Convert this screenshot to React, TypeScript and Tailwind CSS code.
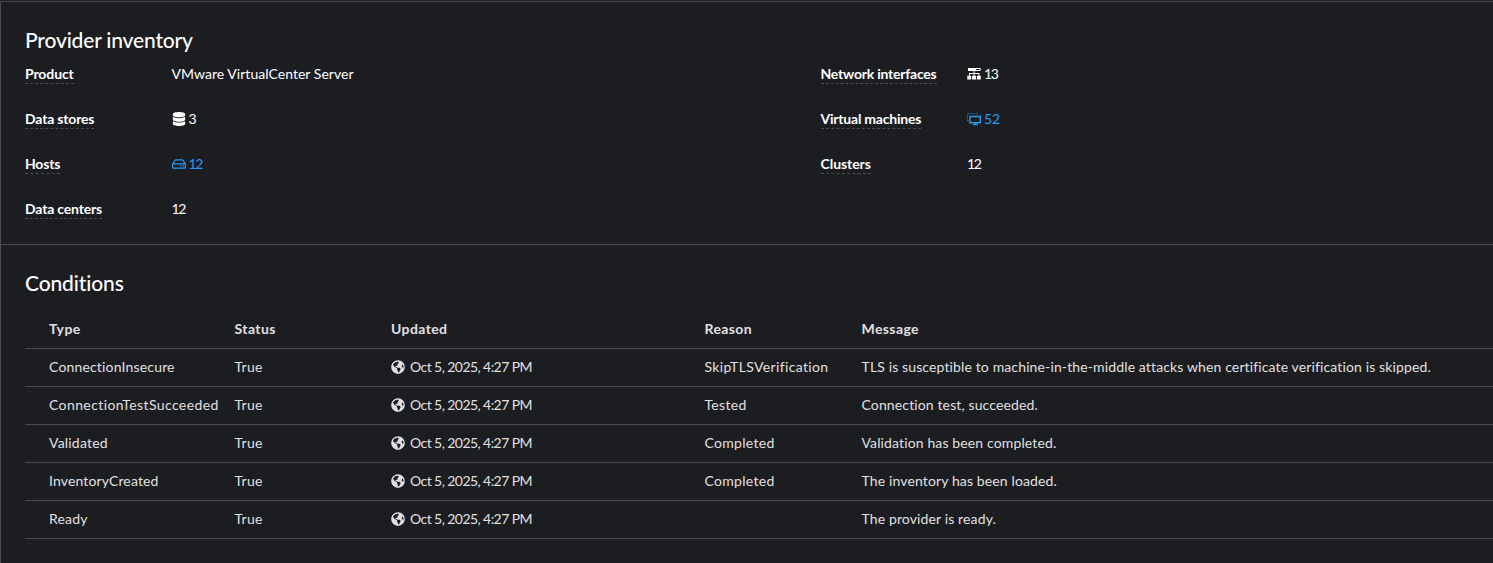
import type { ReactNode } from "react";
import { FaDatabase, FaGlobeAmericas, FaRegHdd } from "react-icons/fa";

function NetworkIcon() {
  return (
    <svg viewBox="0 0 14 14" className="size-3.5" fill="currentColor">
      <path fillRule="evenodd" d="M1 1h12.6v3H1zM9 2v1h3.8V2z" />
      <path d="M6.6 4h1v2h4.8v3h-.9V6.9H7.6V9h-1V6.9H2.9V9H2V6h4.6z" />
      <path d="M.3 8.8h3.9v3.8H.3zM5.1 8.8H9v3.8H5.1zM9.9 8.8h3.9v3.8H9.9z" />
    </svg>
  );
}

function VirtualMachineIcon() {
  return (
    <svg viewBox="0 0 14 14" className="size-3.5" fill="none" stroke="currentColor">
      <path d="M.6 9V1.6h9.8v1.2M.6 9H2" strokeWidth=".9" strokeDasharray="1.2 .8" opacity=".8" />
      <path d="M3 4.5h10.3v6.2H3z" strokeWidth="1.4" />
      <path d="M8.2 11v1.4M5.8 12.6h4.8" strokeWidth="1.2" />
    </svg>
  );
}

function Detail({ label, labelClass = "", children }: { label: string; labelClass?: string; children: ReactNode }) {
  return (
    <div className="grid h-[21px] grid-cols-[146.5px_1fr]">
      <dt>
        <span className={`inline-block h-5 border-b border-dashed border-[#4d4d4d] align-top leading-5 font-bold whitespace-nowrap text-white ${labelClass}`}>
          {label}
        </span>
      </dt>
      <dd className="flex h-5 items-center gap-[3px] leading-5 text-white">{children}</dd>
    </div>
  );
}

const conditions = [
  { type: "ConnectionInsecure", typeClass: "tracking-[0.17px]", reason: "SkipTLSVerification", reasonClass: "tracking-[0.36px]", message: "TLS is susceptible to machine-in-the-middle attacks when certificate verification is skipped." },
  { type: "ConnectionTestSucceeded", typeClass: "tracking-[0.4px]", reason: "Tested", reasonClass: "tracking-[0.3px]", message: "Connection test, succeeded." },
  { type: "Validated", typeClass: "tracking-[0.2px]", reason: "Completed", reasonClass: "tracking-[0.3px]", message: "Validation has been completed." },
  { type: "InventoryCreated", typeClass: "tracking-[0.13px]", reason: "Completed", reasonClass: "tracking-[0.3px]", message: "The inventory has been loaded." },
  { type: "Ready", typeClass: "tracking-[0.2px]", reason: "", reasonClass: "", message: "The provider is ready." },
];

const row = "grid h-[38px] grid-cols-[185.5px_156.5px_313.5px_157px_1fr] items-center border-b border-[#4a4c50] pb-0.5 pl-6 whitespace-nowrap";

export default function App() {
  return (
    <div className="h-[563px] w-full overflow-hidden bg-[#1c1d21] pt-px font-['Lato',sans-serif] text-sm">
      <div className="h-full border-t border-l border-[#4a4c50]">
        <section className="h-[243px] border-b border-[#4a4c50] pt-[23px] pl-6">
          <h2 className="h-[39px] text-[21px] leading-[30px] font-medium tracking-[-0.18px] text-white">Provider inventory</h2>
          <div className="grid grid-cols-[795.5px_1fr]">
            <dl className="flex flex-col gap-6">
              <Detail label="Product" labelClass="tracking-[-0.1px]"><span className="tracking-[0.04px]">VMware VirtualCenter Server</span></Detail>
              <Detail label="Data stores" labelClass="tracking-[-0.17px]"><FaDatabase className="size-3.5" /><span>3</span></Detail>
              <Detail label="Hosts" labelClass="tracking-[-0.2px]"><span className="flex items-center gap-[3px] text-[#2b9af3]"><FaRegHdd className="size-3.5" /><span className="tracking-[-1.4px]">12</span></span></Detail>
              <Detail label="Data centers" labelClass="tracking-[-0.17px]"><span className="tracking-[-1.4px]">12</span></Detail>
            </dl>
            <dl className="flex flex-col gap-6">
              <Detail label="Network interfaces" labelClass="tracking-[-0.22px]"><NetworkIcon /><span className="tracking-[-1.4px]">13</span></Detail>
              <Detail label="Virtual machines" labelClass="tracking-[-0.22px]"><span className="flex items-center gap-[3px] text-[#2b9af3]"><VirtualMachineIcon /><span className="tracking-[-0.2px]">52</span></span></Detail>
              <Detail label="Clusters" labelClass="tracking-[-0.05px]"><span className="tracking-[-1.4px]">12</span></Detail>
            </dl>
          </div>
        </section>
        <section className="pt-[23px] pl-6">
          <h2 className="h-[43px] text-[21px] leading-[30px] font-medium tracking-[-0.12px] text-white">Conditions</h2>
          <div className="text-[#e0e0e0]">
            <div className={`${row} font-bold tracking-[0.4px]`}>
              <span>Type</span>
              <span>Status</span>
              <span>Updated</span>
              <span>Reason</span>
              <span>Message</span>
            </div>
            {conditions.map((c) => (
              <div key={c.type} className={row}>
                <span className={c.typeClass}>{c.type}</span>
                <span className="tracking-[0.3px]">True</span>
                <span className="flex items-center gap-[5px]">
                  <FaGlobeAmericas className="size-3.5" />
                  <span className="tracking-[-0.57px]">Oct 5, 2025, 4:27 PM</span>
                </span>
                <span className={c.reasonClass}>{c.reason}</span>
                <span className="tracking-[0.13px]">{c.message}</span>
              </div>
            ))}
          </div>
        </section>
      </div>
    </div>
  );
}
